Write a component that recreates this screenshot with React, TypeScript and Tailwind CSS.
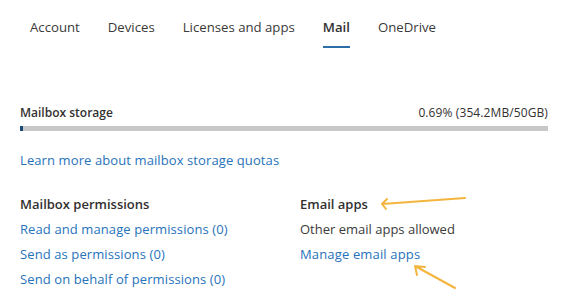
const tabs = ['Account', 'Devices', 'Licenses and apps', 'Mail', 'OneDrive']

const permissions = [
  'Read and manage permissions (0)',
  'Send as permissions (0)',
  'Send on behalf of permissions (0)',
]

export default function App() {
  return (
    <div className="relative h-[302px] w-[562px] overflow-hidden bg-white font-['Open_Sans',sans-serif] text-[#323130]">
      <nav className="flex pl-4">
        {tabs.map((tab) => (
          <div key={tab} className="flex h-12 flex-col px-[14px] pt-[17px]">
            <span className={`text-[13.2px] leading-5 ${tab === 'Mail' ? 'font-semibold' : 'text-[#3b3a39]'}`}>{tab}</span>
            {tab === 'Mail' && <div className="mt-[9px] h-[2px] bg-[#2b6ea8]" />}
          </div>
        ))}
      </nav>

      <div className="pl-5 pr-[14px]">
        <div className="mt-[57px] flex items-center justify-between text-[12px] leading-4">
          <span className="font-semibold">Mailbox storage</span>
          <span className="font-medium tracking-[0.1px]">0.69% (354.2MB/50GB)</span>
        </div>
        <div className="mt-[5px] flex h-[5px] bg-[#c8c8c8]">
          <div className="w-[3px] bg-[#1b4a7a]" />
        </div>

        <a className="mt-[19px] block text-[13px] leading-5 tracking-[0.1px] text-[#2773bb]">Learn more about mailbox storage quotas</a>

        <div className="mt-[22px] grid grid-cols-[280px_1fr] text-[13px] leading-[25px]">
          <div>
            <p className="font-semibold">Mailbox permissions</p>
            {permissions.map((p) => (
              <a key={p} className="block tracking-[0.1px] text-[#2773bb]">{p}</a>
            ))}
          </div>
          <div>
            <p className="font-semibold">Email apps</p>
            <p className="text-[#3b3a39]">Other email apps allowed</p>
            <a className="block tracking-[0.15px] text-[#2773bb]">Manage email apps</a>
          </div>
        </div>
      </div>

      <svg className="pointer-events-none absolute left-0 top-0" width="562" height="302" fill="none" stroke="#f4b53f" strokeWidth="2" strokeLinecap="round" strokeLinejoin="round">
        <path d="M465 198 L382 204 M387 199 L382 204 L386 209" />
        <path d="M455 288 L415 266 M425 267 L415 266 L417 275" />
      </svg>
    </div>
  )
}
